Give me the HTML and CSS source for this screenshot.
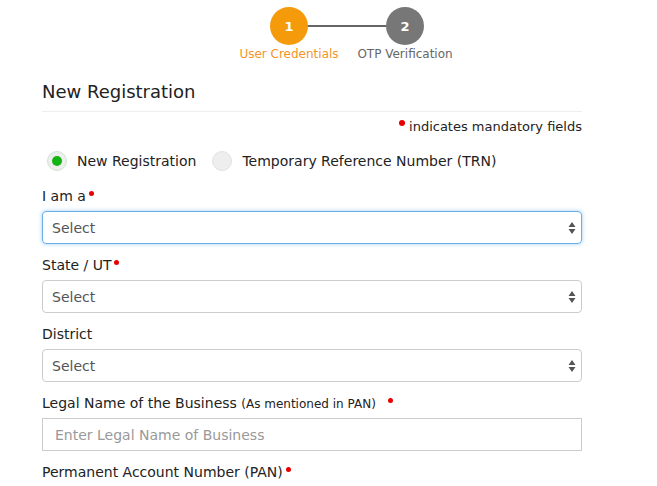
FILE: index.html
```html
<!DOCTYPE html>
<html>
<head>
<meta charset="utf-8">
<link rel="stylesheet" href="styles.css">
</head>
<body>
<div class="stepper">
  <div class="line"></div>
  <div class="circle c1 active">1</div>
  <div class="circle c2">2</div>
  <div class="slabel l1 active">User Credentials</div>
  <div class="slabel l2">OTP Verification</div>
</div>
<div class="form">
  <h2 class="title">New Registration</h2>
  <p class="mandatory"><span class="dot big"></span> indicates mandatory fields</p>
  <div class="radios">
    <label class="radio"><span class="rcircle checked"></span>New Registration</label>
    <label class="radio"><span class="rcircle"></span>Temporary Reference Number (TRN)</label>
  </div>
  <div class="field">
    <div class="flabel">I am a<span class="dot"></span></div>
    <div class="selectwrap"><div class="select focus">Select</div><svg class="arrows" width="8" height="14" viewBox="0 0 8 14"><path d="M4 1 L7.5 6 L0.5 6 Z M0.5 8 L7.5 8 L4 13 Z" fill="#555"/></svg></div>
  </div>
  <div class="field">
    <div class="flabel">State / UT<span class="dot"></span></div>
    <div class="selectwrap"><div class="select">Select</div><svg class="arrows" width="8" height="14" viewBox="0 0 8 14"><path d="M4 1 L7.5 6 L0.5 6 Z M0.5 8 L7.5 8 L4 13 Z" fill="#555"/></svg></div>
  </div>
  <div class="field">
    <div class="flabel">District</div>
    <div class="selectwrap"><div class="select">Select</div><svg class="arrows" width="8" height="14" viewBox="0 0 8 14"><path d="M4 1 L7.5 6 L0.5 6 Z M0.5 8 L7.5 8 L4 13 Z" fill="#555"/></svg></div>
  </div>
  <div class="field">
    <div class="flabel">Legal Name of the Business <span class="small">(As mentioned in PAN)</span> &nbsp;<span class="dot"></span></div>
    <div class="input">Enter Legal Name of Business</div>
  </div>
  <div class="field">
    <div class="flabel">Permanent Account Number (PAN)<span class="dot"></span></div>
  </div>
</div>
</body>
</html>
```
FILE: styles.css
```css
html, body { margin: 0; padding: 0; background: #fff; }
body { font-family: "DejaVu Sans", Verdana, sans-serif; color: #333; font-size: 14px; overflow: hidden; }

.stepper {
  display: grid;
  grid-template-columns: 116px 116px;
  grid-template-rows: 38px 16px;
  margin-left: 231px;
  padding-top: 7px;
  width: 232px;
}
.line {
  grid-column: 1 / 3; grid-row: 1;
  align-self: center;
  height: 2px;
  background: #666;
  margin: 0 58px;
}
.circle {
  grid-row: 1;
  justify-self: center;
  width: 38px; height: 38px;
  border-radius: 50%;
  background: #777;
  color: #fff;
  font-weight: bold;
  font-size: 13px;
  display: flex; align-items: center; justify-content: center;
  position: relative; z-index: 1;
}
.circle.c1 { grid-column: 1; }
.circle.c2 { grid-column: 2; }
.circle.active { background: #f59b0b; }
.slabel {
  grid-row: 2;
  justify-self: center;
  white-space: nowrap;
  font-size: 12px;
  line-height: 16px;
  color: #666;
  margin-top: 1px;
}
.slabel.l1 { grid-column: 1; }
.slabel.l2 { grid-column: 2; }
.slabel.active { color: #f5941f; }

.form { margin-left: 42px; width: 540px; margin-top: 19px; }
.title {
  margin: 0;
  font-size: 18px;
  font-weight: normal;
  line-height: 24px;
  color: #222;
  padding-bottom: 7px;
  border-bottom: 1px solid #eee;
}
.mandatory {
  margin: 6px 0 0;
  text-align: right;
  font-size: 13px;
  line-height: 18px;
  color: #222;
}
.dot {
  display: inline-block;
  width: 5px; height: 5px;
  border-radius: 50%;
  background: #e60000;
  vertical-align: 5px;
  margin-left: 3px;
}
.dot.big { width: 6px; height: 6px; vertical-align: 5px; }

.radios { display: flex; gap: 16px; margin-top: 15px; margin-left: 5px; height: 20px; align-items: center; }
.radio { display: flex; align-items: center; gap: 10px; font-size: 14px; color: #222; }
.rcircle {
  width: 18px; height: 18px;
  border-radius: 50%;
  background: #eee;
  border: 1px solid #e2e2e2;
  display: flex; align-items: center; justify-content: center;
}
.rcircle.checked { border-color: #cfe5cf; }
.rcircle.checked::after {
  content: "";
  width: 10px; height: 10px;
  border-radius: 50%;
  background: #13b313;
}

.field { margin-top: 15px; }
.field + .field { margin-top: 11px; }
.flabel { line-height: 20px; height: 20px; color: #222; margin-bottom: 5px; white-space: nowrap; }
.small { font-size: 12px; }
.selectwrap { position: relative; }
.select {
  box-sizing: border-box;
  height: 33px;
  border: 1px solid #ccc;
  border-radius: 4px;
  padding: 0 9px;
  display: flex; align-items: center;
  color: #555;
  font-size: 14px;
}
.select.focus { border-color: #66afe9; box-shadow: 0 0 4px rgba(102,175,233,.6); }
.arrows { position: absolute; right: 6px; top: 10px; }
.input {
  box-sizing: border-box;
  height: 33px;
  border: 1px solid #ccc;
  padding: 0 12px;
  display: flex; align-items: center;
  color: #999;
  font-size: 14px;
}
```
